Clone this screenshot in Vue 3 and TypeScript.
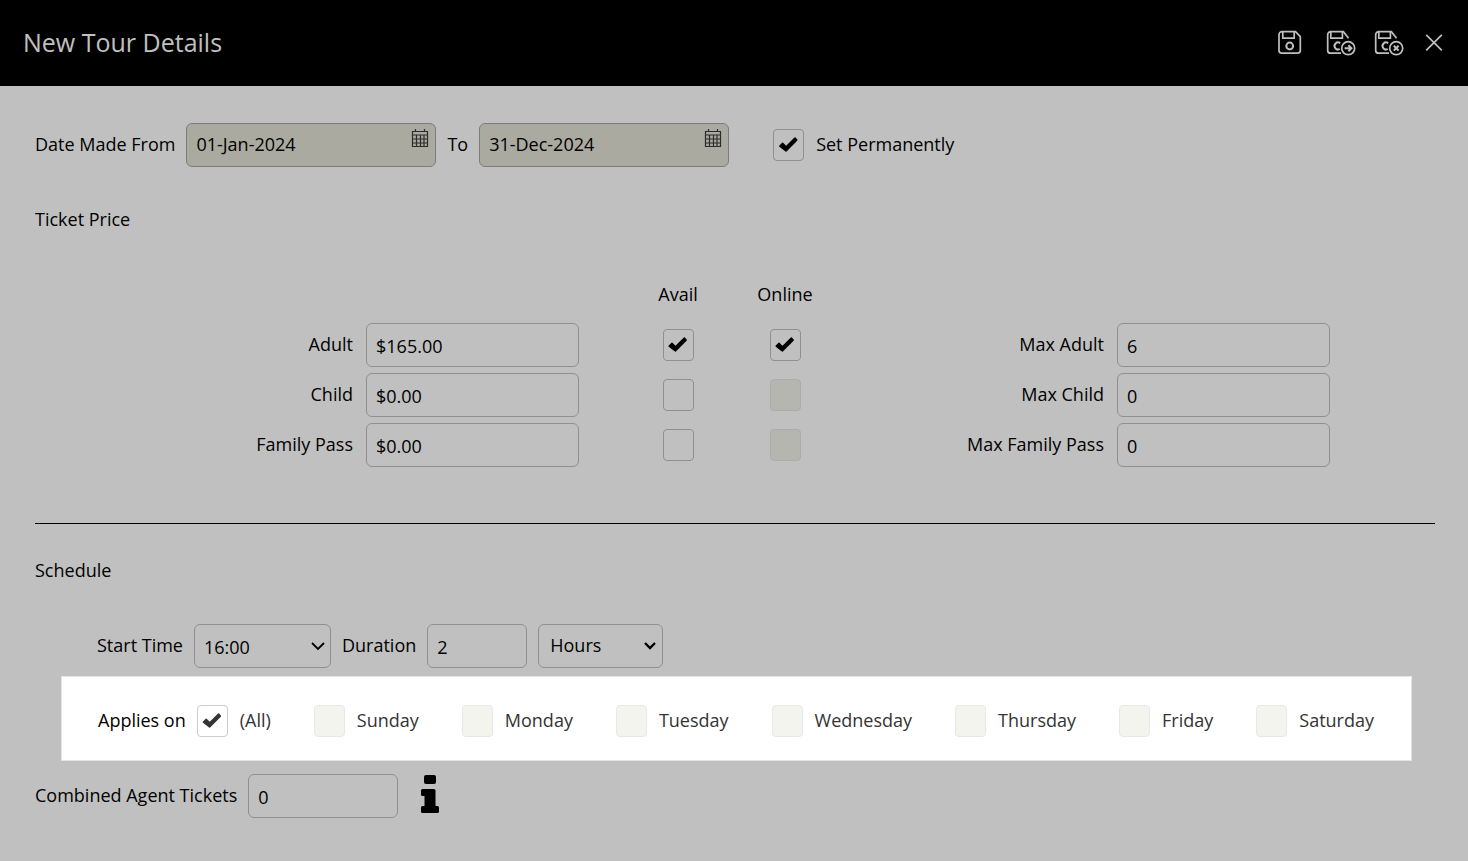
<script setup lang="ts">
import { reactive, ref } from 'vue'

interface PriceRow {
  id: string
  label: string
  price: string
  avail: boolean
  online: boolean
  max: string
}

const dateFrom = ref('01-Jan-2024')
const dateTo = ref('31-Dec-2024')
const permanent = ref(true)
const rows = reactive<PriceRow[]>([
  { id: 'adult', label: 'Adult', price: '$165.00', avail: true, online: true, max: '6' },
  { id: 'child', label: 'Child', price: '$0.00', avail: false, online: false, max: '0' },
  { id: 'family', label: 'Family Pass', price: '$0.00', avail: false, online: false, max: '0' },
])
const startTime = ref('16:00')
const duration = ref('2')
const unit = ref('Hours')
const allDays = ref(true)
const days = ['Sunday', 'Monday', 'Tuesday', 'Wednesday', 'Thursday', 'Friday', 'Saturday']
const combined = ref('0')
</script>

<template>
  <div class="page">
    <header class="topbar">
      <h1>New Tour Details</h1>
      <div class="actions">
        <button type="button" aria-label="Save">
          <svg width="30" height="26" viewBox="0 0 30 26">
            <path d="M4.200 1.700H17.500L22.300 6.600V20.600Q22.300 23.200 19.700 23.200H3.600Q1 23.200 1 20.600V5Q1 1.700 4.200 1.700Z" />
            <path d="M4.800 2V8.200H16.200V2" />
            <circle cx="11.700" cy="16" r="3.400" class="bold" />
          </svg>
        </button>
        <button type="button" aria-label="Save and continue">
          <svg width="30" height="26" viewBox="0 0 30 26">
            <path d="M15 23.2H4.300Q1.700 23.200 1.700 20.600V5Q1.700 1.700 5 1.700H17.400L22.600 8.200" />
            <path d="M4.800 2V8.200H16.400V2" />
            <path d="M14.200 13.200A3.500 3.500 0 1 0 13.800 19" class="bold" />
            <circle cx="22.200" cy="18.200" r="6.500" />
            <path d="M18.600 18.200H25.400M22.400 15.200L25.400 18.200L22.400 21.200" class="bold" />
          </svg>
        </button>
        <button type="button" aria-label="Save and close">
          <svg width="30" height="26" viewBox="0 0 30 26">
            <path d="M15 23.2H4.300Q1.700 23.200 1.700 20.600V5Q1.700 1.700 5 1.700H17.400L22.600 8.200" />
            <path d="M4.800 2V8.200H16.400V2" />
            <path d="M14.200 13.200A3.500 3.500 0 1 0 13.800 19" class="bold" />
            <circle cx="22.200" cy="18.200" r="6.500" />
            <path d="M19.800 15.800L24.600 20.600M24.600 15.800L19.800 20.600" class="bold" />
          </svg>
        </button>
        <button type="button" aria-label="Close">
          <svg width="24" height="26" viewBox="0 0 24 26">
            <path d="M4.200 4.800L19.800 20.400M19.800 4.800L4.200 20.400" />
          </svg>
        </button>
      </div>
    </header>

    <main>
      <div class="row">
        <label for="date-from" class="text">Date Made From</label>
        <span class="date">
          <input id="date-from" v-model="dateFrom" type="text" />
          <svg width="18" height="20" viewBox="0 0 18 20" aria-hidden="true">
            <path d="M1.500 3.500H16.500V18.500H1.500ZM1.500 7H16.500M1.500 11H16.500M1.500 15H16.500M5.500 7V18.500M9.500 7V18.500M13 7V18.500M4.500 1V4M13.500 1V4" />
          </svg>
        </span>
        <label for="date-to" class="text">To</label>
        <span class="date">
          <input id="date-to" v-model="dateTo" type="text" />
          <svg width="18" height="20" viewBox="0 0 18 20" aria-hidden="true">
            <path d="M1.500 3.500H16.500V18.500H1.500ZM1.500 7H16.500M1.500 11H16.500M1.500 15H16.500M5.500 7V18.500M9.500 7V18.500M13 7V18.500M4.500 1V4M13.500 1V4" />
          </svg>
        </span>
        <label class="option permanent">
          <input v-model="permanent" type="checkbox" />
          <span class="text">Set Permanently</span>
        </label>
      </div>

      <section class="prices">
        <h2>Ticket Price</h2>
        <div class="grid">
          <span class="head-avail text">Avail</span>
          <span class="head-online text">Online</span>
        </div>
        <div v-for="r in rows" :key="r.id" class="grid">
          <label :for="`price-${r.id}`" class="caption text">{{ r.label }}</label>
          <div class="price">
            <input :id="`price-${r.id}`" v-model="r.price" type="text" />
          </div>
          <div class="tick">
            <input v-model="r.avail" type="checkbox" :aria-label="`${r.label} available`" />
          </div>
          <div class="tick">
            <input
              v-model="r.online"
              type="checkbox"
              :disabled="!r.avail"
              :aria-label="`${r.label} online`"
            />
          </div>
          <label :for="`max-${r.id}`" class="caption text">Max {{ r.label }}</label>
          <input :id="`max-${r.id}`" v-model="r.max" type="text" />
        </div>
      </section>

      <hr />

      <section>
        <h2 class="schedule">Schedule</h2>
        <div class="row indent">
          <label for="start" class="text">Start Time</label>
          <span class="select start">
            <select id="start" v-model="startTime">
              <option>15:00</option>
              <option>16:00</option>
              <option>17:00</option>
            </select>
            <svg width="14" height="10" viewBox="0 0 14 10" aria-hidden="true">
              <path d="M1 2L7 8L13 2" stroke-width="1.8" />
            </svg>
          </span>
          <label for="duration" class="text">Duration</label>
          <input id="duration" v-model="duration" type="text" class="duration" />
          <span class="select unit">
            <select v-model="unit" aria-label="Duration unit">
              <option>Minutes</option>
              <option>Hours</option>
              <option>Days</option>
            </select>
            <svg width="14" height="10" viewBox="0 0 14 10" aria-hidden="true">
              <path d="M2 2L7 7L12 2" stroke-width="2.4" />
            </svg>
          </span>
        </div>

        <div class="applies" role="group" aria-labelledby="applies-title">
          <span id="applies-title" class="applies-title text">Applies on</span>
          <label class="option">
            <input v-model="allDays" type="checkbox" />
            <span class="text">(All)</span>
          </label>
          <label v-for="d in days" :key="d" class="option day">
            <input type="checkbox" :disabled="allDays" />
            <span class="text">{{ d }}</span>
          </label>
        </div>

        <div class="row">
          <label for="combined" class="text">Combined Agent Tickets</label>
          <input id="combined" v-model="combined" type="text" class="combined" />
          <button type="button" class="info" aria-label="About combined agent tickets">
            <svg width="20" height="40" viewBox="0 0 20 40">
              <rect x="4" y="1" width="12" height="9" rx="2" />
              <path d="M2.500 15H14Q15.500 15 15.500 16.500V32H17.500Q19 32 19 33.500V37.500Q19 39 17.500 39H2.500Q1 39 1 37.500V33.500Q1 32 2.500 32H4.500V22H2.500Q1 22 1 20.500V16.500Q1 15 2.500 15Z" />
            </svg>
          </button>
        </div>
      </section>
    </main>
  </div>
</template>

<style>
body {
  margin: 0;
  background: #c0c0c0;
}
</style>

<style scoped>
* {
  box-sizing: border-box;
}
.page {
  min-height: 100vh;
  background: #c0c0c0;
  color: #000;
  font: 18px/24px 'Open Sans', 'Noto Sans', sans-serif;
}
.topbar {
  display: flex;
  align-items: center;
  justify-content: space-between;
  height: 86px;
  padding: 0 22px 0 23px;
  background: #000;
  color: #c0c0c0;
}
h1 {
  margin: 0;
  padding-bottom: 2px;
  font-size: 25px;
  line-height: 36px;
  font-weight: 400;
}
.actions {
  display: flex;
  gap: 18px;
}
button {
  display: flex;
  padding: 0;
  border: 0;
  background: none;
  color: inherit;
  cursor: pointer;
}
.actions svg {
  fill: none;
  stroke: currentColor;
  stroke-width: 1.7;
}
.actions .bold {
  stroke-width: 2;
}
main {
  padding: 34px 33px 34px 35px;
}
h2 {
  margin: 25px 0;
  padding-bottom: 2px;
  font-size: 18px;
  line-height: 48px;
  font-weight: 400;
}
.text {
  padding-bottom: 2px;
  white-space: nowrap;
}
.row {
  display: flex;
  align-items: center;
  gap: 11px;
  height: 50px;
}
.indent {
  padding-left: 62px;
}
input[type='text'],
select {
  width: 100%;
  height: 44px;
  margin: 0;
  padding: 1px 9px 0;
  border: 1px solid #909090;
  border-radius: 6px;
  background: transparent;
  color: #000;
  font: inherit;
}
.date {
  position: relative;
  width: 250px;
}
.date input[type='text'] {
  display: block;
  padding: 0 9px 2px;
  border-color: #7c7c7a;
  background: #abaaa1;
}
.date svg {
  position: absolute;
  top: 5px;
  right: 7px;
  fill: none;
  stroke: #2c2c2c;
  stroke-width: 1.2;
}
.option {
  display: flex;
  align-items: center;
  gap: 12px;
  white-space: nowrap;
}
.permanent {
  margin-left: 33px;
}
input[type='checkbox'] {
  flex: none;
  appearance: none;
  width: 31px;
  height: 32px;
  margin: 0;
  border: 1px solid #909090;
  border-radius: 4px;
  background: transparent;
}
input[type='checkbox']:checked::before {
  content: '';
  display: block;
  width: 29px;
  height: 30px;
  background: #000;
  clip-path: path('M5.200 15.600L8 12.800Q8.500 12.300 9 12.800L12 15.800L20.300 7.500Q20.900 7 21.400 7.500L23.200 9.600Q23.600 10.200 23.100 10.700L12.400 21.400Q11.900 21.900 11.400 21.400L5.200 16.700Q4.700 16.100 5.200 15.600Z');
}
input[type='checkbox']:disabled {
  border-color: #acacaa;
  background: #b5b6b0;
}
.grid {
  display: grid;
  grid-template-columns: 331fr 259fr 106fr 108fr 278fr 213fr 105fr;
  align-items: center;
  height: 50px;
}
.head-avail,
.head-online {
  text-align: center;
}
.head-avail {
  grid-column: 3;
}
.head-online {
  grid-column: 4;
}
.caption {
  padding-right: 13px;
  text-align: right;
}
.price {
  display: flex;
  padding-right: 46px;
}
.tick {
  display: flex;
  justify-content: center;
}
hr {
  margin: 53px 0 22px;
  border: 0;
  border-top: 1px solid #000;
}
.schedule {
  margin-top: 0;
}
.select {
  position: relative;
  display: flex;
}
.select select {
  appearance: none;
}
.select svg {
  position: absolute;
  top: 17px;
  right: 6px;
  fill: none;
  stroke: #000;
  pointer-events: none;
}
.start {
  width: 137px;
}
.unit {
  width: 125px;
}
.unit select {
  padding: 0 11px 2px;
}
input.duration {
  width: 100px;
}
.applies {
  display: flex;
  align-items: center;
  margin: 5px 23px 10px 26px;
  padding: 20px 36px 15px;
  min-height: 85px;
  border: 1px solid #e4e4e4;
  background: #fff;
  color: #333;
}
.applies-title {
  margin-right: 11px;
  color: #000;
}
.applies input[type='checkbox'] {
  border-color: #ccc;
}
.applies input[type='checkbox']:checked::before {
  background: #333;
}
.applies input[type='checkbox']:disabled {
  border-color: #e8e8e6;
  background: #f4f4ef;
}
.day {
  margin-left: 43px;
}
input.combined {
  width: 150px;
}
.info {
  margin-left: 11px;
  padding-bottom: 4px;
}
</style>
